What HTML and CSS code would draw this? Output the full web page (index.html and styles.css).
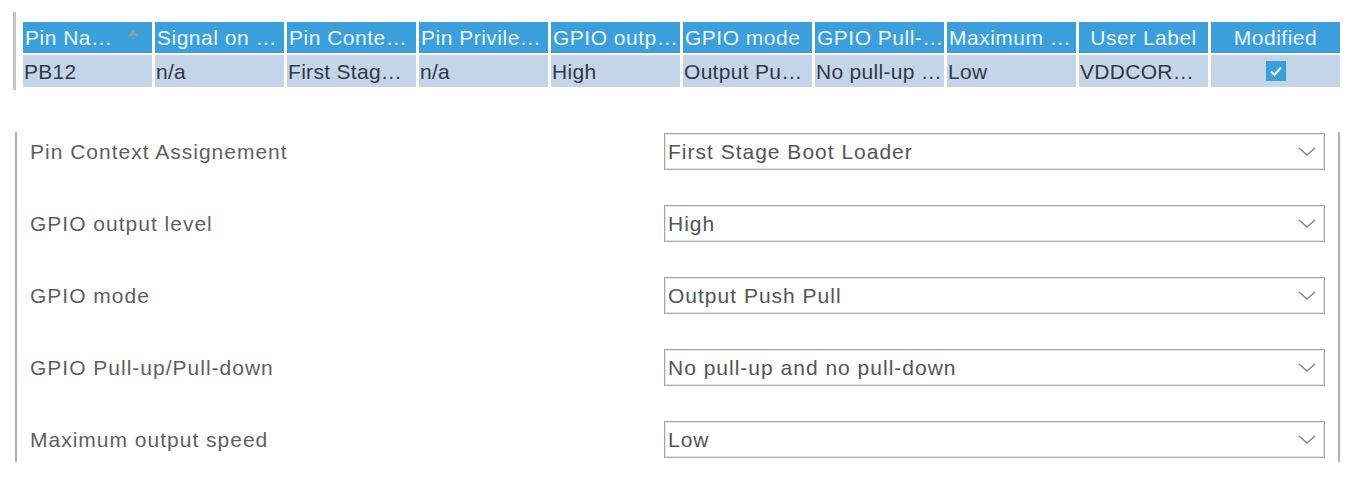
FILE: index.html
```html
<!DOCTYPE html>
<html>
<head>
<meta charset="utf-8">
<link rel="stylesheet" href="styles.css">
</head>
<body>
<div class="table-wrap">
  <div class="grid">
    <div class="th sort">Pin Na…<svg class="sort-icon" width="12" height="14" viewBox="0 0 12 14"><path d="M6 2 L11 8 L1 8 Z" fill="#8f9aa5"/><path d="M4 9 L8 9 L8 12 L4 12 Z" fill="#7f9bb3" opacity="0.5"/></svg></div>
    <div class="th">Signal on …</div>
    <div class="th">Pin Conte…</div>
    <div class="th">Pin Privile…</div>
    <div class="th">GPIO outp…</div>
    <div class="th">GPIO mode</div>
    <div class="th">GPIO Pull-…</div>
    <div class="th">Maximum …</div>
    <div class="th center">User Label</div>
    <div class="th center">Modified</div>

    <div class="td">PB12</div>
    <div class="td">n/a</div>
    <div class="td">First Stag…</div>
    <div class="td">n/a</div>
    <div class="td">High</div>
    <div class="td">Output Pu…</div>
    <div class="td">No pull-up …</div>
    <div class="td">Low</div>
    <div class="td">VDDCOR…</div>
    <div class="td center"><span class="check"><svg width="20" height="20" viewBox="0 0 20 20"><path d="M5 10.5 L8.5 14 L15 6.5" fill="none" stroke="#fff" stroke-width="2"/></svg></span></div>
  </div>
</div>

<div class="panel">
  <div class="row"><div class="label">Pin Context Assignement</div><div class="select"><span>First Stage Boot Loader</span><svg class="chev" width="18" height="9" viewBox="0 0 18 9"><path d="M1 1 L9 8 L17 1" fill="none" stroke="#8a8a8a" stroke-width="1.6"/></svg></div></div>
  <div class="row"><div class="label">GPIO output level</div><div class="select"><span>High</span><svg class="chev" width="18" height="9" viewBox="0 0 18 9"><path d="M1 1 L9 8 L17 1" fill="none" stroke="#8a8a8a" stroke-width="1.6"/></svg></div></div>
  <div class="row"><div class="label">GPIO mode</div><div class="select"><span>Output Push Pull</span><svg class="chev" width="18" height="9" viewBox="0 0 18 9"><path d="M1 1 L9 8 L17 1" fill="none" stroke="#8a8a8a" stroke-width="1.6"/></svg></div></div>
  <div class="row"><div class="label">GPIO Pull-up/Pull-down</div><div class="select"><span>No pull-up and no pull-down</span><svg class="chev" width="18" height="9" viewBox="0 0 18 9"><path d="M1 1 L9 8 L17 1" fill="none" stroke="#8a8a8a" stroke-width="1.6"/></svg></div></div>
  <div class="row"><div class="label">Maximum output speed</div><div class="select"><span>Low</span><svg class="chev" width="18" height="9" viewBox="0 0 18 9"><path d="M1 1 L9 8 L17 1" fill="none" stroke="#8a8a8a" stroke-width="1.6"/></svg></div></div>
</div>
</body>
</html>
```
FILE: styles.css
```css
html, body {
  margin: 0;
  padding: 0;
  background: #fff;
  font-family: "Liberation Sans", Arial, sans-serif;
}
.table-wrap {
  margin: 12px 0 0 13px;
  border-left: 3px solid #c4c4c4;
  padding: 10px 0 3px 7px;
  width: 1317px;
}
.grid {
  display: grid;
  grid-template-columns: repeat(10, 129px);
  column-gap: 3px;
  row-gap: 2px;
}
.th {
  background: #3a9fda;
  color: #eaf5fc;
  height: 31px;
  line-height: 31px;
  font-size: 21px;
  letter-spacing: 0.5px;
  padding-left: 2px;
  white-space: nowrap;
  overflow: hidden;
  position: relative;
}
.th.center, .td.center {
  text-align: center;
  padding-left: 0;
}
.sort-icon {
  position: absolute;
  left: 104px;
  top: 6px;
}
.td {
  background: #c4d4e9;
  color: #333a44;
  height: 32px;
  line-height: 33px;
  font-size: 21px;
  letter-spacing: 0.3px;
  padding-left: 1px;
  white-space: nowrap;
  overflow: hidden;
}
.check {
  display: inline-flex;
  width: 20px;
  height: 20px;
  background: #3a9fda;
  vertical-align: middle;
  margin-top: -4px;
}
.panel {
  margin: 42px 0 0 15px;
  width: 1321px;
  border-left: 2px solid #b0b0b0;
  border-right: 2px solid #b0b0b0;
  padding: 1px 0 4px 0;
  display: flex;
  flex-direction: column;
  gap: 35px;
}
.row {
  display: flex;
  align-items: center;
  height: 37px;
}
.label {
  width: 634px;
  padding-left: 13px;
  color: #5f5f5f;
  font-size: 21px;
  letter-spacing: 1px;
}
.select {
  width: 648px;
  height: 35px;
  border: 1px solid #a6a6a6;
  box-shadow: inset 0 0 0 1px #e4e4e4;
  display: flex;
  align-items: center;
  justify-content: space-between;
  padding: 0 8px 0 3px;
  box-sizing: content-box;
  color: #555;
  font-size: 21px;
  letter-spacing: 1px;
}
.select span { padding-top: 1px; }
.chev { display: block; }
```
